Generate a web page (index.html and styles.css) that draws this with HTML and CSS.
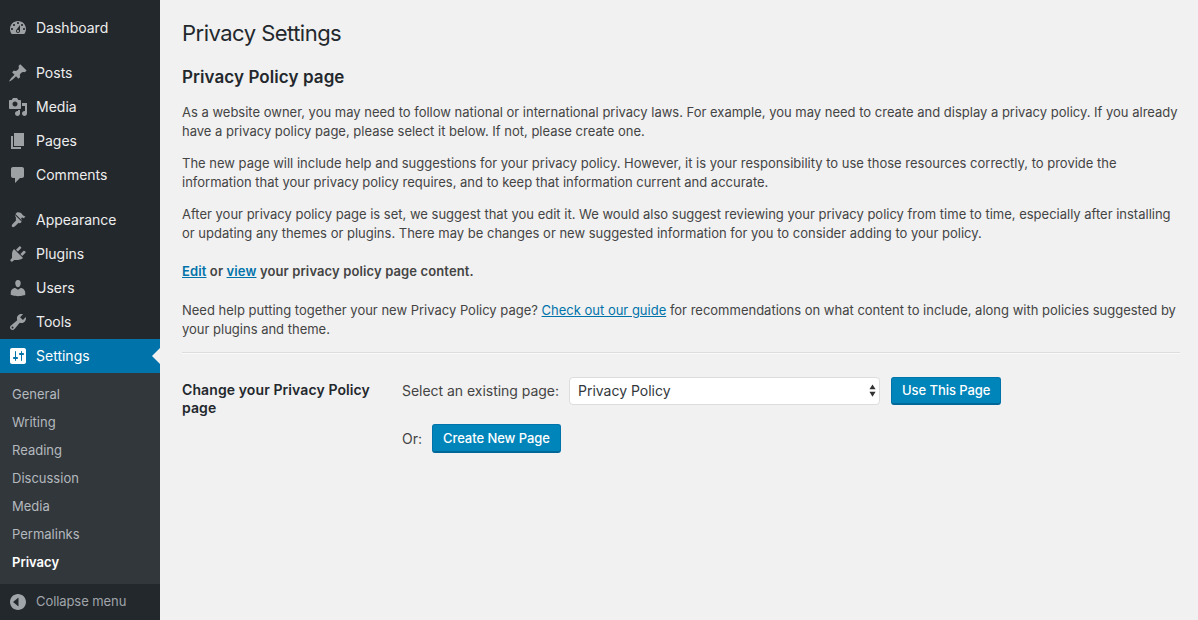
FILE: index.html
```html
<!DOCTYPE html>
<html lang="en">
<head>
<meta charset="utf-8">
<title>Privacy Settings</title>
<link rel="stylesheet" href="styles.css">
</head>
<body>
<div class="app">
  <nav class="sidebar">
    <ul class="menu">
      <li class="item gap-after"><svg class="ico" viewBox="0 0 20 20"><path d="M3.76 16h12.48c1.1-1.37 1.76-3.11 1.76-5 0-4.42-3.58-8-8-8s-8 3.58-8 8c0 1.89.66 3.63 1.76 5zM10 4c.55 0 1 .45 1 1s-.45 1-1 1-1-.45-1-1 .45-1 1-1zM6 6c.55 0 1 .45 1 1s-.45 1-1 1-1-.45-1-1 .45-1 1-1zm8 0c.55 0 1 .45 1 1s-.45 1-1 1-1-.45-1-1 .45-1 1-1zm-5.37 5.55L12 7v6c0 1.1-.9 2-2 2s-2-.9-2-2c0-.57.24-1.08.63-1.45zM4 10c.55 0 1 .45 1 1s-.45 1-1 1-1-.45-1-1 .45-1 1-1zm12 0c.55 0 1 .45 1 1s-.45 1-1 1-1-.45-1-1 .45-1 1-1zm-5 3c0-.55-.45-1-1-1s-1 .45-1 1 .45 1 1 1 1-.45 1-1z"/></svg><span>Dashboard</span></li>
      <li class="item"><svg class="ico" viewBox="0 0 20 20"><path d="M10.44 3.02l1.82-1.82 6.36 6.35-1.83 1.82c-1.05-.68-2.48-.57-3.41.36l-.75.75c-.92.93-1.04 2.35-.35 3.41l-1.83 1.82-2.41-2.41-2.8 2.79c-.42.42-3.38 2.71-3.8 2.29s1.86-3.39 2.28-3.81l2.79-2.79L4.1 9.36l1.83-1.82c1.05.69 2.48.57 3.4-.36l.75-.75c.93-.92 1.05-2.35.36-3.41z"/></svg><span>Posts</span></li>
      <li class="item"><svg class="ico" viewBox="0 0 20 20"><path d="M13 11V4c0-.55-.45-1-1-1h-1.67L9 1H5L3.67 3H2c-.55 0-1 .45-1 1v7c0 .55.45 1 1 1h10c.55 0 1-.45 1-1zM7 4.500c1.380 0 2.500 1.120 2.500 2.500S8.380 9.500 7 9.500 4.500 8.380 4.500 7 5.620 4.500 7 4.500zM14 6h5v10.500c0 1.380-1.120 2.500-2.500 2.500S14 17.880 14 16.500s1.120-2.500 2.500-2.500c.17 0 .34.02.5.05V9h-3V6zm-4 8.050V13h2v3.500c0 1.380-1.120 2.500-2.500 2.500S7 17.880 7 16.500 8.120 14 9.500 14c.17 0 .34.02.5.05z"/></svg><span>Media</span></li>
      <li class="item"><svg class="ico" viewBox="0 0 20 20"><path d="M6 15V2h10v13H6zm-1 1h8v2H3V5h2v11z"/></svg><span>Pages</span></li>
      <li class="item gap-after"><svg class="ico" viewBox="0 0 20 20"><path d="M5 2h9c1.100 0 2 .9 2 2v7c0 1.100-.9 2-2 2h-2l-5 5v-5H5c-1.100 0-2-.9-2-2V4c0-1.100.9-2 2-2z"/></svg><span>Comments</span></li>
      <li class="item"><svg class="ico" viewBox="0 0 20 20"><path d="M14.48 11.06L7.41 3.99l1.5-1.5c.5-.56 2.3-.47 3.59.32 1.21.74 1.9 1.84 1.9 1.84.75.76 1.65 1.28 3.1 1.95l-1.72 1.71c-.84-.63-1.42-.9-1.92-.74l-.64.64c-.16.5.11 1.08.74 1.92zM6.7 4.7l7.07 7.07-1.06 1.06c-.4.4-1.24.4-1.75.1l-.35-.2-3.6 3.6c-.8.8-2.2 1.2-2.9.5s-.3-2.1.5-2.9l3.6-3.6-.2-.35c-.3-.5-.3-1.35.1-1.75z"/></svg><span>Appearance</span></li>
      <li class="item"><svg class="ico" viewBox="0 0 20 20"><path d="M13.11 4.36L9.87 7.6 8 5.73l3.24-3.24c.35-.34 1.05-.2 1.56.32.52.51.66 1.21.31 1.55zm-8 1.77l.91-1.12 9.01 9.01-1.19.84c-.71.71-2.63 1.16-3.82 1.16H6.14L4.9 17.26c-.59.59-1.54.59-2.12 0-.59-.58-.59-1.53 0-2.12l1.24-1.24v-3.88c0-1.13.4-3.19 1.09-3.89zm7.26 3.97l3.24-3.24c.34-.35 1.04-.21 1.55.31.52.51.66 1.21.31 1.55l-3.24 3.25z"/></svg><span>Plugins</span></li>
      <li class="item"><svg class="ico" viewBox="0 0 20 20"><path d="M10 9.25c-2.27 0-2.73-3.44-2.73-3.44C7 4.02 7.82 2 9.97 2c2.16 0 2.98 2.02 2.71 3.81 0 0-.41 3.44-2.68 3.44zm0 2.57L12.72 10c2.39 0 4.52 2.33 4.52 4.53v2.49s-3.65 1.13-7.24 1.13c-3.65 0-7.24-1.13-7.24-1.13v-2.49c0-2.25 1.94-4.48 4.47-4.48z"/></svg><span>Users</span></li>
      <li class="item"><svg class="ico" viewBox="0 0 20 20"><path d="M16.68 9.77c-1.34 1.34-3.3 1.67-4.95.99l-5.41 6.52c-.99.99-2.59.99-3.58 0s-.99-2.59 0-3.57l6.52-5.42c-.68-1.65-.35-3.61.99-4.95 1.28-1.28 3.12-1.62 4.72-1.06l-2.89 2.89 2.82 2.82 2.86-2.87c.53 1.58.18 3.39-1.08 4.65zM3.81 16.21c.4.39 1.04.39 1.43 0 .4-.4.4-1.04 0-1.43-.39-.4-1.03-.4-1.43 0-.39.39-.39 1.03 0 1.43z"/></svg><span>Tools</span></li>
      <li class="item current"><svg class="ico" viewBox="0 0 20 20"><path d="M18 16V4c0-1.100-.9-2-2-2H4c-1.100 0-2 .9-2 2v12c0 1.100.9 2 2 2h12c1.100 0 2-.9 2-2zM8 11h1c.55 0 1 .45 1 1s-.45 1-1 1H8v1.500c0 .28-.22.5-.5.5s-.5-.22-.5-.5V13H6c-.55 0-1-.45-1-1s.45-1 1-1h1V5.500c0-.28.22-.5.5-.5s.5.22.5.5V11zm5-2h-1c-.55 0-1-.45-1-1s.45-1 1-1h1V5.500c0-.28.22-.5.5-.5s.5.22.5.5V7h1c.55 0 1 .45 1 1s-.45 1-1 1h-1v5.500c0 .28-.22.5-.5.5s-.5-.22-.5-.5V9z"/></svg><span>Settings</span></li>
    </ul>
    <ul class="submenu">
      <li>General</li>
      <li>Writing</li>
      <li>Reading</li>
      <li>Discussion</li>
      <li>Media</li>
      <li>Permalinks</li>
      <li class="on">Privacy</li>
    </ul>
    <div class="collapse"><svg class="ico" viewBox="0 0 20 20"><path d="M18 10c0-4.420-3.580-8-8-8s-8 3.580-8 8 3.580 8 8 8 8-3.580 8-8zm-7.500 4.500L5 10l5.500-4.500z"/></svg><span>Collapse menu</span></div>
  </nav>
  <main class="content">
    <h1>Privacy Settings</h1>
    <h2>Privacy Policy page</h2>
    <p>As a website owner, you may need to follow national or international privacy laws. For example, you may need to create and display a privacy policy. If you already have a privacy policy page, please select it below. If not, please create one.</p>
    <p>The new page will include help and suggestions for your privacy policy. However, it is your responsibility to use those resources correctly, to provide the information that your privacy policy requires, and to keep that information current and accurate.</p>
    <p>After your privacy policy page is set, we suggest that you edit it. We would also suggest reviewing your privacy policy from time to time, especially after installing or updating any themes or plugins. There may be changes or new suggested information for you to consider adding to your policy.</p>
    <p class="strong"><a href="#">Edit</a> or <a href="#">view</a> your privacy policy page content.</p>
    <p>Need help putting together your new Privacy Policy page? <a class="plain" href="#">Check out our guide</a> for recommendations on what content to include, along with policies suggested by your plugins and theme.</p>
    <hr>
    <div class="form-row">
      <div class="form-label">Change your Privacy Policy page</div>
      <div class="form-fields">
        <div class="field-line">
          <label for="page">Select an existing page:</label>
          <div class="select-wrap">
            <select id="page"><option>Privacy Policy</option></select>
            <svg class="arrows" viewBox="0 0 8 14"><path d="M4 0l3.500 5.500h-7zM4 14L.5 8.500h7z"/></svg>
          </div>
          <button type="button">Use This Page</button>
        </div>
        <div class="field-line second">
          <span>Or:</span>
          <button type="button">Create New Page</button>
        </div>
      </div>
    </div>
  </main>
</div>
</body>
</html>
```
FILE: styles.css
```css
* { box-sizing: border-box; }
html, body { margin: 0; height: 100%; }
body {
  background: #f1f1f1;
  color: #444;
  font-family: Inter, "Liberation Sans", sans-serif;
  font-size: 13px;
  line-height: 19px;
  overflow: hidden;
}
.app { display: flex; height: 620px; }
.sidebar {
  width: 160px;
  flex: none;
  background: #23282d;
  display: flex;
  flex-direction: column;
  padding-top: 11px;
  line-height: 19.5px;
}
ul { list-style: none; margin: 0; padding: 0; }
.item {
  height: 34px;
  display: flex;
  align-items: center;
  gap: 8px;
  padding-left: 8px;
  color: #eee;
  font-size: 14px;
  position: relative;
}
.gap-after { margin-bottom: 11px; }
.ico { width: 20px; height: 20px; flex: none; fill: #9ea1a4; }
.current { background: #0073aa; color: #fff; }
.current .ico { fill: #fff; }
.current::after {
  content: "";
  position: absolute;
  right: 0;
  top: 9px;
  border: 8px solid transparent;
  border-left-width: 0;
  border-right-color: #f1f1f1;
}
.submenu {
  background: #32373c;
  padding: 8px 0 0;
  height: 211px;
  flex: none;
}
.submenu li {
  height: 28px;
  padding-left: 12px;
  display: flex;
  align-items: center;
  color: #b4b9be;
  font-size: 13px;
}
.submenu .on { color: #fff; font-weight: 600; }
.collapse {
  display: flex;
  align-items: center;
  gap: 8px;
  padding-left: 8px;
  height: 36px;
  color: #a0a5aa;
  font-size: 13px;
  letter-spacing: -0.08px;
}
.collapse .ico { fill: #a0a5aa; }
.content { flex: 1; padding: 0 18px 0 22px; min-width: 0; letter-spacing: -0.004px; }
h1 {
  margin: 0;
  padding-top: 17px;
  font-size: 22px;
  letter-spacing: -0.52px;
  line-height: 32px;
  font-weight: 400;
  color: #23282d;
}
h2 {
  margin: 16px 0 0;
  font-size: 17px;
  letter-spacing: 0.08px;
  line-height: 24px;
  font-weight: 600;
  color: #23282d;
}
p { margin: 13px 0 0; }
h2 + p { margin-top: 14px; }
.strong { font-weight: 600; margin-top: 19px; letter-spacing: 0.12px; }
.strong + p { margin-top: 20px; }
a { color: #0073aa; }
hr {
  margin: 13px 0 0;
  border: 0;
  border-top: 1px solid #ddd;
  border-bottom: 1px solid #fafafa;
  height: 2px;
}
.form-row { display: flex; margin-top: 23px; }
.form-label {
  width: 220px;
  flex: none;
  font-weight: 600;
  font-size: 14px;
  letter-spacing: 0.1px;
  line-height: 18px;
  color: #23282d;
  padding-right: 20px;
  padding-top: 4px;
}
.form-fields { font-size: 14px; letter-spacing: -0.03px; line-height: 19.5px; }
.field-line { display: flex; align-items: center; height: 28px; }
.second { margin-top: 19px; height: 29px; }
.field-line label { margin-right: 10px; }
.field-line span { margin-right: 10px; }
.select-wrap { position: relative; width: 311px; height: 28px; margin-right: 11px; }
select {
  appearance: none;
  width: 100%;
  height: 100%;
  background: #fff;
  border: 1px solid #ddd;
  border-radius: 4px;
  padding: 0 8px;
  font: inherit;
  color: #32373c;
}
.arrows {
  position: absolute;
  right: 4px;
  top: 7px;
  width: 7px;
  height: 13px;
  fill: #333;
  pointer-events: none;
}
button {
  height: 100%;
  padding: 0 10px;
  background: #0085ba;
  border: 1px solid #0073aa;
  border-bottom-color: #006799;
  border-bottom-width: 2px;
  border-radius: 3px;
  color: #fff;
  font: 500 13px/1 Inter, "Liberation Sans", sans-serif;
  letter-spacing: -0.05px;
}
```
